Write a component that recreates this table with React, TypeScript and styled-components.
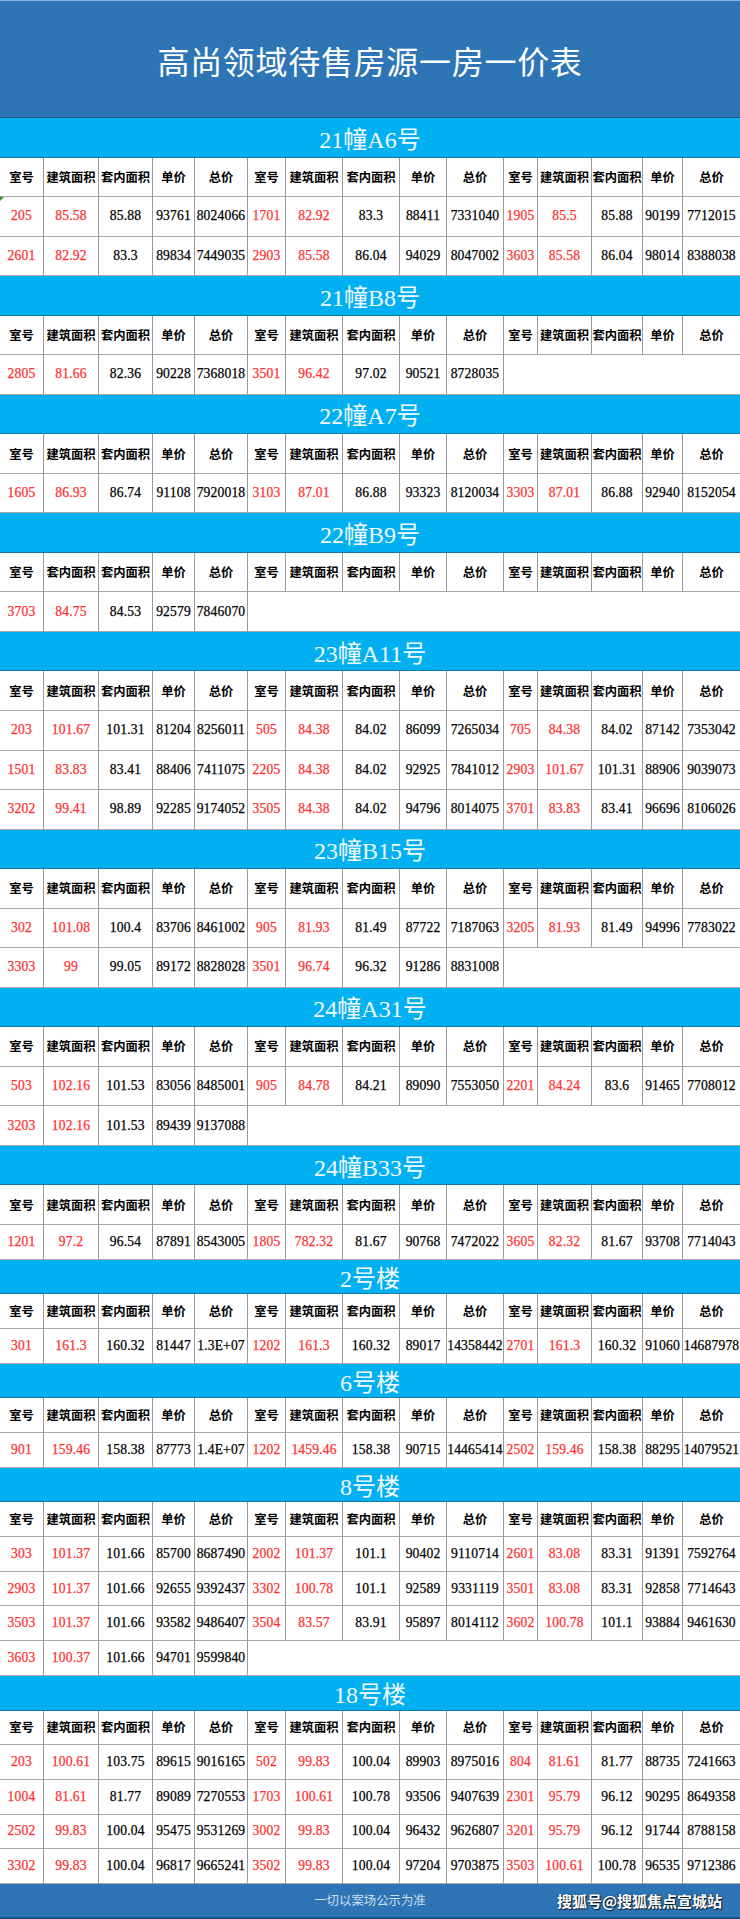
import React from "react";
import styled, { createGlobalStyle } from "styled-components";

const GlobalStyle = createGlobalStyle`
  html, body { margin: 0; padding: 0; background: #ffffff; }
  body { font-family: "Liberation Serif", "Noto Sans CJK SC", serif; }
`;

const COLS =
  "44px 55px 54px 42px 53px 38px 57px 57px 47px 57px 34px 54px 51px 40px 57px";
const TALL = 39.54;
const SHORT = 34.7;

type Unit = [string, string, string, string, string];

interface Section {
  title: string;
  head: number;
  rowH: number;
  alt?: boolean;
  rows: Unit[][];
}

const sections: Section[] = [
  {
    title: "21幢A6号",
    head: TALL,
    rowH: TALL,
    rows: [
      [
        ["205", "85.58", "85.88", "93761", "8024066"],
        ["1701", "82.92", "83.3", "88411", "7331040"],
        ["1905", "85.5", "85.88", "90199", "7712015"],
      ],
      [
        ["2601", "82.92", "83.3", "89834", "7449035"],
        ["2903", "85.58", "86.04", "94029", "8047002"],
        ["3603", "85.58", "86.04", "98014", "8388038"],
      ],
    ],
  },
  {
    title: "21幢B8号",
    head: TALL,
    rowH: TALL,
    rows: [
      [
        ["2805", "81.66", "82.36", "90228", "7368018"],
        ["3501", "96.42", "97.02", "90521", "8728035"],
      ],
    ],
  },
  {
    title: "22幢A7号",
    head: TALL,
    rowH: TALL,
    rows: [
      [
        ["1605", "86.93", "86.74", "91108", "7920018"],
        ["3103", "87.01", "86.88", "93323", "8120034"],
        ["3303", "87.01", "86.88", "92940", "8152054"],
      ],
    ],
  },
  {
    title: "22幢B9号",
    head: TALL,
    rowH: TALL,
    alt: true,
    rows: [[["3703", "84.75", "84.53", "92579", "7846070"]]],
  },
  {
    title: "23幢A11号",
    head: TALL,
    rowH: TALL,
    rows: [
      [
        ["203", "101.67", "101.31", "81204", "8256011"],
        ["505", "84.38", "84.02", "86099", "7265034"],
        ["705", "84.38", "84.02", "87142", "7353042"],
      ],
      [
        ["1501", "83.83", "83.41", "88406", "7411075"],
        ["2205", "84.38", "84.02", "92925", "7841012"],
        ["2903", "101.67", "101.31", "88906", "9039073"],
      ],
      [
        ["3202", "99.41", "98.89", "92285", "9174052"],
        ["3505", "84.38", "84.02", "94796", "8014075"],
        ["3701", "83.83", "83.41", "96696", "8106026"],
      ],
    ],
  },
  {
    title: "23幢B15号",
    head: TALL,
    rowH: TALL,
    rows: [
      [
        ["302", "101.08", "100.4", "83706", "8461002"],
        ["905", "81.93", "81.49", "87722", "7187063"],
        ["3205", "81.93", "81.49", "94996", "7783022"],
      ],
      [
        ["3303", "99", "99.05", "89172", "8828028"],
        ["3501", "96.74", "96.32", "91286", "8831008"],
      ],
    ],
  },
  {
    title: "24幢A31号",
    head: TALL,
    rowH: TALL,
    rows: [
      [
        ["503", "102.16", "101.53", "83056", "8485001"],
        ["905", "84.78", "84.21", "89090", "7553050"],
        ["2201", "84.24", "83.6", "91465", "7708012"],
      ],
      [["3203", "102.16", "101.53", "89439", "9137088"]],
    ],
  },
  {
    title: "24幢B33号",
    head: TALL,
    rowH: SHORT,
    rows: [
      [
        ["1201", "97.2", "96.54", "87891", "8543005"],
        ["1805", "782.32", "81.67", "90768", "7472022"],
        ["3605", "82.32", "81.67", "93708", "7714043"],
      ],
    ],
  },
  {
    title: "2号楼",
    head: SHORT,
    rowH: SHORT,
    rows: [
      [
        ["301", "161.3", "160.32", "81447", "1.3E+07"],
        ["1202", "161.3", "160.32", "89017", "14358442"],
        ["2701", "161.3", "160.32", "91060", "14687978"],
      ],
    ],
  },
  {
    title: "6号楼",
    head: SHORT,
    rowH: SHORT,
    rows: [
      [
        ["901", "159.46", "158.38", "87773", "1.4E+07"],
        ["1202", "1459.46", "158.38", "90715", "14465414"],
        ["2502", "159.46", "158.38", "88295", "14079521"],
      ],
    ],
  },
  {
    title: "8号楼",
    head: SHORT,
    rowH: SHORT,
    rows: [
      [
        ["303", "101.37", "101.66", "85700", "8687490"],
        ["2002", "101.37", "101.1", "90402", "9110714"],
        ["2601", "83.08", "83.31", "91391", "7592764"],
      ],
      [
        ["2903", "101.37", "101.66", "92655", "9392437"],
        ["3302", "100.78", "101.1", "92589", "9331119"],
        ["3501", "83.08", "83.31", "92858", "7714643"],
      ],
      [
        ["3503", "101.37", "101.66", "93582", "9486407"],
        ["3504", "83.57", "83.91", "95897", "8014112"],
        ["3602", "100.78", "101.1", "93884", "9461630"],
      ],
      [["3603", "100.37", "101.66", "94701", "9599840"]],
    ],
  },
  {
    title: "18号楼",
    head: SHORT,
    rowH: SHORT,
    rows: [
      [
        ["203", "100.61", "103.75", "89615", "9016165"],
        ["502", "99.83", "100.04", "89903", "8975016"],
        ["804", "81.61", "81.77", "88735", "7241663"],
      ],
      [
        ["1004", "81.61", "81.77", "89089", "7270553"],
        ["1703", "100.61", "100.78", "93506", "9407639"],
        ["2301", "95.79", "96.12", "90295", "8649358"],
      ],
      [
        ["2502", "99.83", "100.04", "95475", "9531269"],
        ["3002", "99.83", "100.04", "96432", "9626807"],
        ["3201", "95.79", "96.12", "91744", "8788158"],
      ],
      [
        ["3302", "99.83", "100.04", "96817", "9665241"],
        ["3502", "99.83", "100.04", "97204", "9703875"],
        ["3503", "100.61", "100.78", "96535", "9712386"],
      ],
    ],
  },
];

const HEAD = ["室号", "建筑面积", "套内面积", "单价", "总价"];
const HEAD_ALT = ["室号", "套内面积", "套内面积", "单价", "总价"];

const Page = styled.main`
  width: 740px;
  display: flex;
  flex-direction: column;
  overflow: hidden;
`;

const TitleBar = styled.header`
  height: 118px;
  box-sizing: border-box;
  background: #2e75b6;
  border-top: 1px solid #8db3da;
  border-bottom: 1px solid #1c5a8c;
  display: flex;
  align-items: center;
  justify-content: center;
  color: #ffffff;
  font-family: "Noto Sans CJK SC", sans-serif;
  font-size: 32px;
  letter-spacing: 0.7px;
  padding-top: 2px;
`;

const Band = styled.h2<{ $h: number }>`
  margin: 0;
  height: ${(p) => p.$h}px;
  box-sizing: border-box;
  background: #00b0f0;
  border-bottom: 1px solid #1877a8;
  display: flex;
  align-items: center;
  justify-content: center;
  color: #f2faff;
  font-family: "Liberation Serif", "Noto Sans CJK SC", serif;
  font-weight: 400;
  font-size: 24px;
`;

const Row = styled.div<{ $h: number }>`
  display: grid;
  grid-template-columns: ${COLS};
  height: ${(p) => p.$h}px;
`;

const Cell = styled.div<{ $red?: boolean; $head?: boolean; $flag?: boolean }>`
  position: relative;
  box-sizing: border-box;
  border-right: 1px solid #9a9a9a;
  border-bottom: 1px solid #a8a8a8;
  display: flex;
  align-items: center;
  justify-content: center;
  white-space: nowrap;
  overflow: hidden;
  color: ${(p) => (p.$red ? "#ff3030" : "#000000")};
  font-family: ${(p) =>
    p.$head
      ? '"Noto Sans CJK SC", sans-serif'
      : '"Liberation Serif", "Noto Sans CJK SC", serif'};
  font-size: ${(p) => (p.$head ? "12.3px" : "13.6px")};
  font-weight: ${(p) => (p.$head ? 700 : 400)};
  letter-spacing: ${(p) => (p.$head ? "0" : "0.15px")};
  -webkit-text-stroke: ${(p) => (p.$head ? "0" : "0.25px")};
  &:last-child {
    border-right: none;
  }
  &::before {
    content: "";
    display: ${(p) => (p.$flag ? "block" : "none")};
    position: absolute;
    left: 0;
    top: 0;
    border-top: 4px solid #2e9a3a;
    border-right: 4px solid transparent;
  }
`;

const Blank = styled.div<{ $span: number }>`
  grid-column: span ${(p) => p.$span};
  box-sizing: border-box;
  border-bottom: 1px solid #a8a8a8;
`;

const Footer = styled.footer`
  position: relative;
  height: ${SHORT}px;
  box-sizing: border-box;
  background: #2e75b6;
  border-bottom: 2px solid #1d4f7c;
  display: flex;
  align-items: center;
  justify-content: center;
  color: rgba(235, 242, 250, 0.85);
  font-family: "Noto Sans CJK SC", sans-serif;
  font-size: 12.4px;
`;

const Watermark = styled.span`
  position: absolute;
  right: 18px;
  top: 50%;
  transform: translateY(-50%);
  color: #ffffff;
  font-family: "Noto Sans CJK SC", sans-serif;
  font-weight: 700;
  font-size: 15px;
  text-shadow: 1px 1px 1px rgba(0, 0, 0, 0.75), 0 0 2px rgba(0, 0, 0, 0.5);
`;

function HeaderRow({ h, alt }: { h: number; alt?: boolean }) {
  const cells: React.ReactNode[] = [];
  for (let g = 0; g < 3; g++) {
    const labels = g === 0 && alt ? HEAD_ALT : HEAD;
    labels.forEach((t, i) => {
      cells.push(
        <Cell key={`${g}-${i}`} $head>
          {t}
        </Cell>
      );
    });
  }
  return <Row $h={h}>{cells}</Row>;
}

function DataRow({ h, units, flag }: { h: number; units: Unit[]; flag?: boolean }) {
  const cells: React.ReactNode[] = [];
  units.forEach((u, g) => {
    u.forEach((v, i) => {
      cells.push(
        <Cell key={`${g}-${i}`} $red={i < 2} $flag={flag && g === 0 && i === 0}>
          {v}
        </Cell>
      );
    });
  });
  const missing = (3 - units.length) * 5;
  return (
    <Row $h={h}>
      {cells}
      {missing > 0 && <Blank $span={missing} />}
    </Row>
  );
}

export default function App() {
  return (
    <>
      <GlobalStyle />
      <Page>
        <TitleBar>高尚领域待售房源一房一价表</TitleBar>
        {sections.map((s, si) => (
          <section key={s.title}>
            <Band $h={s.head}>{s.title}</Band>
            <HeaderRow h={s.head} alt={s.alt} />
            {s.rows.map((r, ri) => (
              <DataRow key={ri} h={s.rowH} units={r} flag={si === 0 && ri === 0} />
            ))}
          </section>
        ))}
        <Footer>
          一切以案场公示为准
          <Watermark>搜狐号@搜狐焦点宣城站</Watermark>
        </Footer>
      </Page>
    </>
  );
}
